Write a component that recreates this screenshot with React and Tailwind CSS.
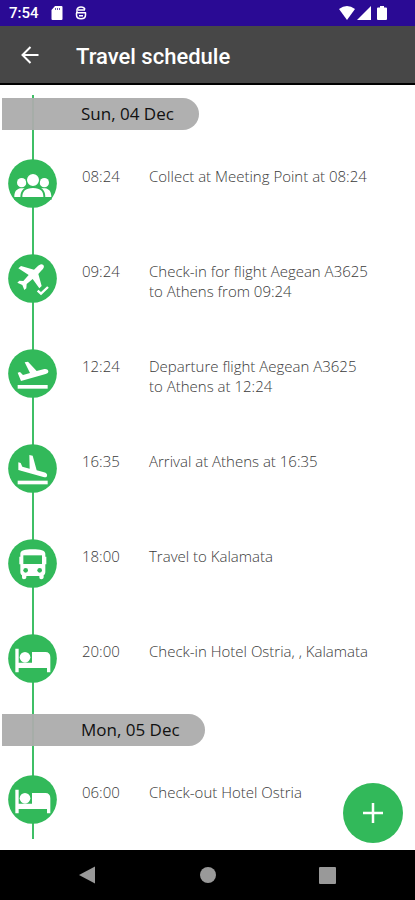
import React from "react";

const sans = "font-['Open_Sans','Noto_Sans',sans-serif]";

function Badge({ children }) {
  return (
    <svg viewBox="0 0 147 147" className="relative size-[49px] shrink-0" fill="#fff" aria-hidden="true">
      <circle cx="73.5" cy="73.5" r="73" fill="#32b95a" />
      {children}
    </svg>
  );
}

function GroupIcon() {
  return (
    <Badge>
      <circle cx="41" cy="71" r="14" />
      <circle cx="109" cy="71" r="14" />
      <path d="M19 114 C19 98 25 90 38 88 H52 V114 Z M130 114 C130 98 124 90 111 88 H97 V114 Z" />
      <path d="M40 117 C39 96 50 84 75 84 C100 84 110 96 109 117 Z" stroke="#32b95a" strokeWidth="6" />
      <circle cx="75" cy="63" r="20" stroke="#32b95a" strokeWidth="4" />
      <path d="M18 115 H131 V122 H18 Z" fill="#32b95a" />
    </Badge>
  );
}

function CheckInIcon() {
  return (
    <Badge>
      <path d="M106 33 C100 28 94 32 89 37 L78 47 L39 36 L31 43 L62 63 L46 81 L34 80 L28 86 L43 93 L49 108 L55 103 L56 90 L74 75 L94 103 L101 96 L91 60 L101 49 C107 43 110 38 106 33 Z" />
      <path d="M89 110 L99 119 L120 99" fill="none" stroke="#fff" strokeWidth="7" />
    </Badge>
  );
}

function DepartureIcon() {
  return (
    <Badge>
      <path d="M29 71 L36 69 L45 78 L66 72 L50 40 L60 38 L86 66 L109 60 C115 59 120 61 121 66 C122 71 118 74 113 75 L39 96 Z" />
      <rect x="29" y="108" width="90" height="11" />
    </Badge>
  );
}

function ArrivalIcon() {
  return (
    <Badge>
      <path d="M31 55 L38 57 L43 68 L65 74 L64 33 L74 35 L86 79 L108 85 C115 87 119 91 117 96 C116 101 111 100 106 99 L31 78 Z" />
      <rect x="29" y="110" width="90" height="11" />
    </Badge>
  );
}

function BusIcon() {
  return (
    <Badge>
      <path d="M37 44 C38 34 50 31 74 31 C98 31 111 34 112 44 V98 C112 104 110 107 107 109 V115 C107 119 104 121 100 121 C96 121 94 119 94 115 V111 H55 V115 C55 119 52 121 48 121 C44 121 42 119 42 115 V109 C39 107 37 104 37 98 Z" />
      <path d="M34 53 h5 v23 h-5 z M110 53 h5 v23 h-5 z" />
      <rect x="46" y="49" width="56" height="26" fill="#32b95a" />
      <circle cx="53" cy="94" r="7" fill="#32b95a" />
      <circle cx="95" cy="94" r="7" fill="#32b95a" />
    </Badge>
  );
}

function BedIcon() {
  return (
    <Badge>
      <path d="M22 44 H32 V86 H72 V54 H112 C122 54 127 60 127 70 V115 H117 V102 H32 V115 H22 Z" />
      <circle cx="51" cy="70" r="16" />
    </Badge>
  );
}

const days = [
  {
    date: "Sun, 04 Dec",
    items: [
      { time: "08:24", lines: ["Collect at Meeting Point at 08:24"], Icon: GroupIcon },
      { time: "09:24", lines: ["Check-in for flight Aegean A3625", "to Athens from 09:24"], Icon: CheckInIcon },
      { time: "12:24", lines: ["Departure flight Aegean A3625", "to Athens at 12:24"], Icon: DepartureIcon },
      { time: "16:35", lines: ["Arrival at Athens at 16:35"], Icon: ArrivalIcon },
      { time: "18:00", lines: ["Travel to Kalamata"], Icon: BusIcon },
      { time: "20:00", lines: ["Check-in Hotel Ostria, , Kalamata"], Icon: BedIcon },
    ],
  },
  {
    date: "Mon, 05 Dec",
    items: [{ time: "06:00", lines: ["Check-out Hotel Ostria"], Icon: BedIcon }],
  },
];

function StatusBar() {
  return (
    <div className="flex h-[26px] items-center bg-[#2a0a94] pl-[9px] pr-7 text-white">
      <span className="w-[42px] font-['Roboto',sans-serif] text-[15px] font-medium leading-5">7:54</span>
      <svg viewBox="0 0 12 14" className="h-[14px] w-3" fill="#fff" aria-hidden="true">
        <path d="M4 0 H10.500 Q11.500 0 11.500 1 V13 Q11.500 14 10.500 14 H1.500 Q.5 14 .5 13 V4 Z" />
        <path d="M4.500 2 v2 M6.500 2 v2 M8.500 2 v2" stroke="#2a0a94" strokeWidth=".7" />
      </svg>
      <svg viewBox="0 0 12 14" className="ml-3 h-[14px] w-3" fill="none" stroke="#fff" strokeWidth="1.500" aria-hidden="true">
        <path d="M10 3.500 C9 .3 3 .3 2 3.500 V6.500 M1 6.800 H11 M10.500 6.500 V9 C10.500 14 1.500 14 1.500 9 V7 M3 4 H10 M4 9.800 H8" />
      </svg>
      <div className="ml-auto flex items-center gap-[2px]">
        <svg viewBox="0 0 16 14" className="h-[14px] w-4" fill="#fff" aria-hidden="true">
          <path d="M0 3 Q8 -3 16 3 L8 14 Z" />
        </svg>
        <svg viewBox="0 0 14 14" className="h-[14px] w-[14px]" fill="#fff" aria-hidden="true">
          <path d="M14 0 V14 H0 Z" />
        </svg>
        <svg viewBox="0 0 10 14" className="ml-1 h-[14px] w-[10px]" fill="#fff" aria-hidden="true">
          <path d="M3 0 H7 V1.500 H9 Q10 1.500 10 2.500 V13 Q10 14 9 14 H1 Q0 14 0 13 V2.500 Q0 1.500 1 1.500 H3 Z" />
        </svg>
      </div>
    </div>
  );
}

export default function App() {
  return (
    <div className="flex min-h-screen flex-col bg-white">
      <StatusBar />
      <header className="flex h-[59px] items-center border-b-2 border-black bg-[#474747] pt-1 text-white">
        <button type="button" aria-label="Back" className="ml-[18px] flex size-6 items-center justify-center pb-1">
          <svg viewBox="0 0 18 18" className="size-[18px]" fill="none" stroke="#fff" strokeWidth="2" aria-hidden="true">
            <path d="M17.500 9 H2 M9.500 1 L1.500 9 L9.500 17" />
          </svg>
        </button>
        <h1 className="ml-[34px] font-['Roboto',sans-serif] text-[22px] font-medium leading-7">Travel schedule</h1>
      </header>

      <main className="relative flex-1 pt-[13px]">
        <div className="absolute bottom-[11px] left-8 top-[10px] w-[2px] bg-[#3fbf66]" />
        {days.map((day) => (
          <section key={day.date} className="mb-[7px] last-of-type:mb-0">
            <h2
              className={`relative ml-[2px] mb-[7px] flex h-8 w-fit items-center rounded-r-full bg-[#acacac]/95 pl-[79px] pr-[25px] text-[17px] leading-6 text-[#111] ${sans}`}
            >
              {day.date}
            </h2>
            <ul>
              {day.items.map(({ time, lines, Icon }) => (
                <li key={time} className="flex h-[95px] items-start pl-2 pt-[22px]">
                  <Icon />
                  <div className={`mt-[7px] flex flex-1 pl-[25px] text-[15px] font-light leading-5 text-[#3a3a3a] ${sans}`}>
                    <time className="w-[67px] shrink-0">{time}</time>
                    <p>
                      {lines.map((line) => (
                        <span key={line} className="block">
                          {line}
                        </span>
                      ))}
                    </p>
                  </div>
                </li>
              ))}
            </ul>
          </section>
        ))}
        <button
          type="button"
          aria-label="Add"
          className="absolute bottom-[7px] right-3 flex size-[60px] items-center justify-center rounded-full bg-[#32b95a]"
        >
          <svg viewBox="0 0 20 20" className="size-5" stroke="#fff" strokeWidth="2.500" aria-hidden="true">
            <path d="M10 0 V20 M0 10 H20" />
          </svg>
        </button>
      </main>

      <nav className="flex h-[50px] items-center justify-between bg-black px-[79px]">
        <button type="button" aria-label="System back">
          <svg viewBox="0 0 18 18" className="size-[18px]" fill="#999" aria-hidden="true">
            <path d="M16 0.500 V17.500 L0 9 Z" />
          </svg>
        </button>
        <button type="button" aria-label="Home" className="size-4 rounded-full bg-[#999]" />
        <button type="button" aria-label="Recents" className="size-[17px] rounded-[1px] bg-[#999]" />
      </nav>
    </div>
  );
}
